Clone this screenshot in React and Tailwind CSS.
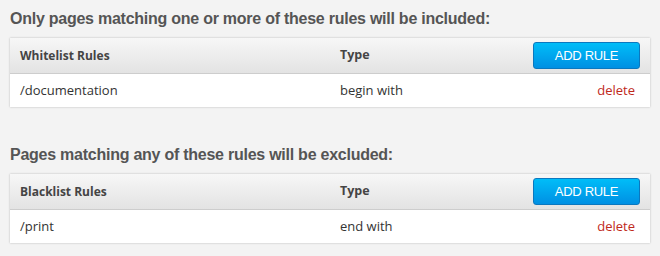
import React from 'react'

const sections = [
    {
        title: 'Only pages matching one or more of these rules will be included:',
        label: 'Whitelist Rules',
        rules: [{ path: '/documentation', type: 'begin with' }],
    },
    {
        title: 'Pages matching any of these rules will be excluded:',
        label: 'Blacklist Rules',
        rules: [{ path: '/print', type: 'end with' }],
    },
]

function RuleTable({ title, label, rules }) {
    return (
        <div>
            <h2 className="text-[16px] leading-[20px] font-bold text-[#555] tracking-[-0.25px] font-['Liberation_Sans',Arial,sans-serif]">{title}</h2>
            <div className="mt-[9px] bg-white shadow-[0_0_2px_rgba(0,0,0,0.25)] font-['Open_Sans',sans-serif] text-[13px] text-[#333]">
                <div className="h-[36px] flex items-center bg-gradient-to-b from-[#f7f7f7] to-[#e3e3e3] border-b border-[#cdcdcd]">
                    <div className="w-[330px] pl-[10px] text-[12px] font-bold text-[#444]">{label}</div>
                    <div className="flex-1 text-[12.5px] font-bold text-[#444]">Type</div>
                    <button className="mr-[10px] w-[107px] h-[27px] rounded-[3px] border border-[#0b78bf] bg-gradient-to-b from-[#00bdf8] to-[#0090e3] text-white text-[13px] tracking-[-0.3px] font-['Liberation_Sans',Arial,sans-serif]">
                        ADD RULE
                    </button>
                </div>
                {rules.map((r, i) => (
                    <div key={i} className="h-[33px] flex items-center">
                        <div className="w-[330px] pl-[10px]">{r.path}</div>
                        <div className="flex-1">{r.type}</div>
                        <a href="#" className="mr-[15px] text-[#c0291b]">delete</a>
                    </div>
                ))}
            </div>
        </div>
    )
}

export default function App() {
    return (
        <div className="w-[660px] h-[256px] bg-[#f3f3f3] px-[10px] pt-[9px] flex flex-col gap-[38px]">
            {sections.map((s, i) => (
                <RuleTable key={i} {...s} />
            ))}
        </div>
    )
}
